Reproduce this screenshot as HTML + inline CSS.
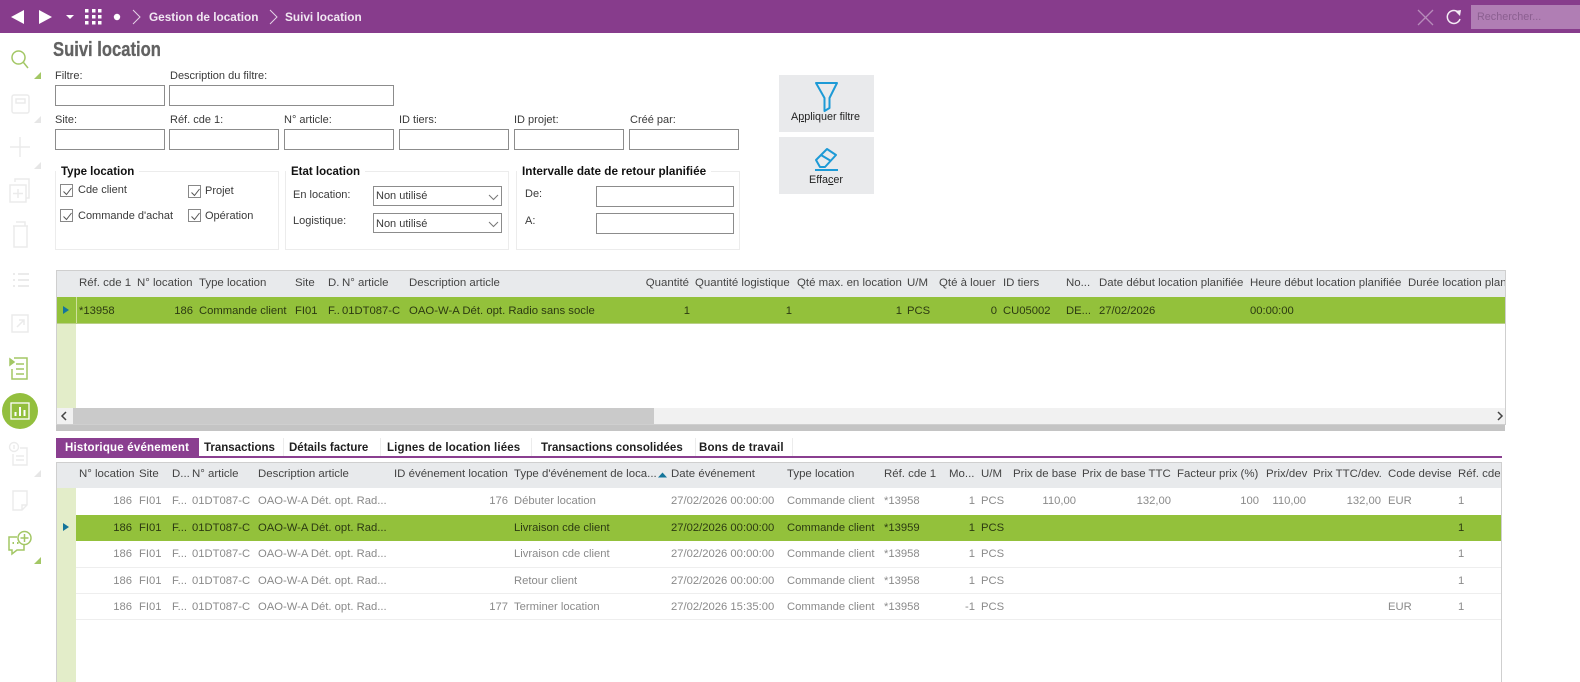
<!DOCTYPE html>
<html lang="fr"><head><meta charset="utf-8"><title>Suivi location</title>
<style>
html,body{margin:0;padding:0;background:#fff}
body{width:1580px;height:682px;overflow:hidden;position:relative;font-family:"Liberation Sans",Arial,sans-serif;color:#333}
div,span,svg{position:absolute}
#root{left:0;top:0;width:1580px;height:682px;overflow:hidden;filter:blur(.35px)}
.t{white-space:nowrap;line-height:14px;font-size:11px;color:#3a3a3a}
.in{background:#fff;border:1px solid #8c8c8c;box-sizing:border-box}
.gb{border:1px solid #ececec;box-sizing:border-box}
.gt{white-space:nowrap;font-weight:bold;font-size:11.5px;line-height:14px;color:#111;background:#fff;padding:0 5px;top:165px}
.cb{width:13px;height:13px;border:1px solid #888;box-sizing:border-box;background:#fff}
.cb svg{left:1px;top:1px}
.h{white-space:nowrap;font-size:11.45px;line-height:14px;color:#444}
.c{white-space:nowrap;font-size:11.25px;line-height:14px;color:#8a8a8a}
.s{color:#2c3a12}
.r{transform:translateX(-100%)}
.tab{white-space:nowrap;font-weight:bold;font-size:11.5px;line-height:14px;color:#1f1f1f;top:441px}
.tsep{width:1px;top:438px;height:18px;background:#ececec}
.tri{width:0;height:0;border-style:solid;border-width:0 0 7px 7px;border-color:transparent transparent #e6e6e6 transparent}
</style></head><body><div id="root">

<!-- top bar -->
<div style="left:0;top:0;width:1580px;height:33px;background:#873c8c"></div>
<svg style="left:0;top:0" width="300" height="33">
<path d="M11 17 24 10V24Z" fill="#fff"/><path d="M52 17 39 10V24Z" fill="#fff"/><path d="M66 15H74L70 19Z" fill="#fff"/>
<g fill="#fff"><rect x="85" y="9" width="3.5" height="3.5"/><rect x="92" y="9" width="3.5" height="3.5"/><rect x="98" y="9" width="3.5" height="3.5"/><rect x="85" y="15" width="3.5" height="3.5"/><rect x="92" y="15" width="3.5" height="3.5"/><rect x="98" y="15" width="3.5" height="3.5"/><rect x="85" y="21" width="3.5" height="3.5"/><rect x="92" y="21" width="3.5" height="3.5"/><rect x="98" y="21" width="3.5" height="3.5"/></g>
<circle cx="117" cy="17" r="3.2" fill="#fff"/>
<path d="M133 10 140 17 133 24M270 10 277 17 270 24" fill="none" stroke="#e5d3e6" stroke-width="1"/>
</svg>
<div class="t" style="left:149px;top:10px;font-weight:bold;font-size:11.8px;color:#f1e7f2">Gestion de location</div>
<div class="t" style="left:285px;top:10px;font-weight:bold;font-size:11.8px;color:#f1e7f2">Suivi location</div>
<svg style="left:1410px;top:5px" width="60" height="25">
<path d="M8 5 23 20M23 5 8 20" stroke="#b78bba" stroke-width="1.3" fill="none"/>
<path d="M49 8A6.5 6.5 0 1 0 50 14" stroke="#f4ecf5" stroke-width="1.5" fill="none"/><path d="M45 6 51 5 50 11Z" fill="#f4ecf5"/>
</svg>
<div style="left:1471px;top:5px;width:109px;height:24px;background:#b07eb4"></div>
<div class="t" style="left:1477px;top:10px;color:#8b5f90;font-size:10.8px">Rechercher...</div>

<!-- sidebar icons -->
<svg style="left:0;top:33px" width="50" height="649" fill="none">
<g stroke="#a3c765" stroke-width="1.5"><circle cx="18.500" cy="24.500" r="6.500"/><path d="M23.500 29.500 28 35"/></g>
<g stroke="#ebebeb" stroke-width="1.5">
<rect x="12" y="62" width="17" height="18" rx="2"/><rect x="16" y="66" width="9" height="4"/>
<path d="M20 104V124M10 114H30"/>
<path d="M15 149V146H29V165H26M10 152H26V169H10ZM18 156V165M13 160.500H23"/>
<path d="M14 193H27V214H14ZM13 193H28M16 189H25V193"/>
<path d="M18 241H29M18 247H29M18 253H29M13 241H15M13 247H15M13 253H15" stroke-width="2"/>
<path d="M12 282H28V299H12ZM17 294 24 287M19 287H24V292"/>
</g>
<g stroke="#a3c765" stroke-width="1.5"><path d="M14 325H27V346H12V336M16 331H24M16 336H24M16 341H24"/><path d="M10 326 14 329 10 332Z" fill="#a3c765"/></g>
<circle cx="20" cy="378" r="18" fill="#93bf3e"/>
<rect x="11" y="370" width="18" height="16" stroke="#fff" stroke-width="1.3"/>
<path d="M15.500 383V379M20 383V374M24.500 383V377" stroke="#fff" stroke-width="2"/>
<g stroke="#ebebeb" stroke-width="1.400"><circle cx="14" cy="414" r="4.500"/><path d="M14 412V416"/><path d="M20 415H27V432H13V421M16 423H24M16 427H24"/>
<path d="M13 458H27V472L22 477H13ZM27 472H22V477"/></g>
<g stroke="#a3c765" stroke-width="1.500"><circle cx="24.500" cy="505" r="6.500"/><path d="M24.500 501V509M20.500 505H28.500"/><path d="M17 504H9V517H12V521L17 517H24V512"/><path d="M12.500 510H14M17 510H18.500" stroke-width="2"/></g>
</svg>
<div class="tri" style="left:34px;top:72px;border-bottom-color:#a3c765"></div>
<div class="tri" style="left:34px;top:116px"></div>
<div class="tri" style="left:34px;top:162px"></div>
<div class="tri" style="left:34px;top:470px"></div>
<div class="tri" style="left:34px;top:557px;border-bottom-color:#a3c765"></div>

<!-- title -->
<div class="t" style="left:53px;top:39px;font-size:20px;line-height:22px;font-weight:bold;color:#626262;-webkit-text-stroke:.3px #626262;transform:scaleX(.83);transform-origin:left top">Suivi location</div>

<!-- filters -->
<div class="t" style="left:55px;top:69px">Filtre:</div>
<div class="t" style="left:170px;top:69px">Description du filtre:</div>
<div class="in" style="left:55px;top:85px;width:110px;height:21px"></div>
<div class="in" style="left:169px;top:85px;width:225px;height:21px"></div>
<div class="t" style="left:55px;top:113px">Site:</div>
<div class="t" style="left:170px;top:113px">Réf. cde 1:</div>
<div class="t" style="left:284px;top:113px">N° article:</div>
<div class="t" style="left:399px;top:113px">ID tiers:</div>
<div class="t" style="left:514px;top:113px">ID projet:</div>
<div class="t" style="left:630px;top:113px">Créé par:</div>
<div class="in" style="left:55px;top:129px;width:110px;height:21px"></div>
<div class="in" style="left:169px;top:129px;width:110px;height:21px"></div>
<div class="in" style="left:284px;top:129px;width:110px;height:21px"></div>
<div class="in" style="left:399px;top:129px;width:110px;height:21px"></div>
<div class="in" style="left:514px;top:129px;width:110px;height:21px"></div>
<div class="in" style="left:629px;top:129px;width:110px;height:21px"></div>

<!-- group boxes -->
<div class="gb" style="left:55px;top:171px;width:224px;height:79px"></div>
<div class="gt" style="left:56px">Type location</div>
<div class="gb" style="left:285px;top:171px;width:224px;height:79px"></div>
<div class="gt" style="left:286px">Etat location</div>
<div class="gb" style="left:516px;top:171px;width:224px;height:79px"></div>
<div class="gt" style="left:517px;font-size:11.75px">Intervalle date de retour planifiée</div>

<div class="cb" style="left:60px;top:184px"><svg width="11" height="11" fill="none"><path d="M1.500 5.500 4.500 8.500 9.500 2" stroke="#555"/></svg></div>
<div class="t" style="left:78px;top:183px">Cde client</div>
<div class="cb" style="left:188px;top:185px"><svg width="11" height="11" fill="none"><path d="M1.500 5.500 4.500 8.500 9.500 2" stroke="#555"/></svg></div>
<div class="t" style="left:205px;top:184px">Projet</div>
<div class="cb" style="left:60px;top:209px"><svg width="11" height="11" fill="none"><path d="M1.500 5.500 4.500 8.500 9.500 2" stroke="#555"/></svg></div>
<div class="t" style="left:78px;top:209px">Commande d'achat</div>
<div class="cb" style="left:188px;top:209px"><svg width="11" height="11" fill="none"><path d="M1.500 5.500 4.500 8.500 9.500 2" stroke="#555"/></svg></div>
<div class="t" style="left:205px;top:209px">Opération</div>

<div class="t" style="left:293px;top:188px">En location:</div>
<div class="t" style="left:293px;top:214px">Logistique:</div>
<div class="in" style="left:373px;top:186px;width:129px;height:20px"></div>
<div class="t" style="left:376px;top:189px">Non utilisé</div>
<div class="in" style="left:373px;top:213px;width:129px;height:20px"></div>
<div class="t" style="left:376px;top:217px">Non utilisé</div>
<svg style="left:488px;top:190px" width="12" height="40" fill="none"><path d="M1 5 5.500 9.500 10 5M1 32 5.500 36.500 10 32" stroke="#777"/></svg>
<div class="t" style="left:525px;top:187px">De:</div>
<div class="t" style="left:525px;top:214px">A:</div>
<div class="in" style="left:596px;top:186px;width:138px;height:21px"></div>
<div class="in" style="left:596px;top:213px;width:138px;height:21px"></div>

<!-- buttons -->
<div style="left:779px;top:75px;width:95px;height:57px;background:#e9eaec"></div>
<div style="left:779px;top:137px;width:95px;height:57px;background:#e9eaec"></div>
<svg style="left:779px;top:75px" width="95" height="120" fill="none">
<path d="M37 8H58L50.500 23V33L45.500 36V23Z" stroke="#1d9ad6" stroke-width="2" stroke-linejoin="round"/>
<path d="M37 85 48 74 57 80 46 92H41ZM42 80 52 86" stroke="#1d9ad6" stroke-width="2" stroke-linejoin="round"/>
<path d="M36 95H59" stroke="#1d9ad6" stroke-width="2"/>
</svg>
<div class="t" style="left:791px;top:110px;color:#222;font-size:10.8px">A<span style="position:static;text-decoration:underline">p</span>pliquer filtre</div>
<div class="t" style="left:809px;top:173px;color:#222;font-size:10.8px">Effa<span style="position:static;text-decoration:underline">c</span>er</div>

<!-- grid 1 -->
<div style="left:56px;top:270px;width:1450px;height:155px;border:1px solid #cfcfcf;box-sizing:border-box;background:#fff"></div>
<div style="left:57px;top:271px;width:1448px;height:26px;background:#e8eaec"></div>
<div style="left:57px;top:324px;width:19px;height:84px;background:#e3edc9"></div>
<div style="left:57px;top:297px;width:1448px;height:27px;background:#93c13b;border-bottom:1px solid #b9cf86;box-sizing:border-box"></div>
<div style="left:76px;top:297px;width:1px;height:26px;background:#cfe09d"></div>
<svg style="left:62px;top:305px" width="8" height="10"><path d="M1 1 7 5 1 9Z" fill="#14759a"/></svg>

<div class="h" style="left:79px;top:276px">Réf. cde 1</div>
<div class="h" style="left:137px;top:276px">N° location</div>
<div class="h" style="left:199px;top:276px">Type location</div>
<div class="h" style="left:295px;top:276px">Site</div>
<div class="h" style="left:328px;top:276px">D.</div>
<div class="h" style="left:342px;top:276px">N° article</div>
<div class="h" style="left:409px;top:276px">Description article</div>
<div class="h r" style="left:689px;top:276px">Quantité</div>
<div class="h" style="left:695px;top:276px">Quantité logistique</div>
<div class="h" style="left:797px;top:276px">Qté max. en location</div>
<div class="h" style="left:907px;top:276px">U/M</div>
<div class="h" style="left:939px;top:276px">Qté à louer</div>
<div class="h" style="left:1003px;top:276px">ID tiers</div>
<div class="h" style="left:1066px;top:276px">No...</div>
<div class="h" style="left:1099px;top:276px">Date début location planifiée</div>
<div class="h" style="left:1250px;top:276px">Heure début location planifiée</div>
<div style="left:1408px;top:276px;width:97px;height:14px;overflow:hidden"><div class="h" style="left:0;top:0">Durée location planifiée</div></div>

<div class="c s" style="left:79px;top:304px">*13958</div>
<div class="c s r" style="left:193px;top:304px">186</div>
<div class="c s" style="left:199px;top:304px">Commande client</div>
<div class="c s" style="left:295px;top:304px">FI01</div>
<div class="c s" style="left:328px;top:304px">F..</div>
<div class="c s" style="left:342px;top:304px">01DT087-C</div>
<div class="c s" style="left:409px;top:304px;font-size:11.35px">OAO-W-A Dét. opt. Radio sans socle</div>
<div class="c s r" style="left:690px;top:304px">1</div>
<div class="c s r" style="left:792px;top:304px">1</div>
<div class="c s r" style="left:902px;top:304px">1</div>
<div class="c s" style="left:907px;top:304px">PCS</div>
<div class="c s r" style="left:997px;top:304px">0</div>
<div class="c s" style="left:1003px;top:304px">CU05002</div>
<div class="c s" style="left:1066px;top:304px">DE...</div>
<div class="c s" style="left:1099px;top:304px">27/02/2026</div>
<div class="c s" style="left:1250px;top:304px">00:00:00</div>

<!-- scrollbar + splitter -->
<div style="left:57px;top:408px;width:1448px;height:16px;background:#f1f1f1"></div>
<div style="left:73px;top:408px;width:581px;height:16px;background:#cacaca"></div>
<svg style="left:57px;top:408px" width="1448" height="16" fill="none"><path d="M9 4 5 8 9 12M1441 4 1445 8 1441 12" stroke="#444" stroke-width="1.5"/></svg>
<div style="left:56px;top:425px;width:1449px;height:6px;background:#c4c4c4"></div>

<!-- tabs -->
<div style="left:56px;top:456px;width:1446px;height:2px;background:#8a3f90"></div>
<div style="left:56px;top:438px;width:143px;height:19px;background:#8a3f90"></div>
<div class="tab" style="left:65px;color:#fff;letter-spacing:.2px">Historique événement</div>
<div class="tab" style="left:204px">Transactions</div>
<div class="tsep" style="left:283px"></div>
<div class="tab" style="left:289px">Détails facture</div>
<div class="tsep" style="left:380px"></div>
<div class="tab" style="left:387px;letter-spacing:.15px">Lignes de location liées</div>
<div class="tsep" style="left:531px"></div>
<div class="tab" style="left:541px;letter-spacing:.05px">Transactions consolidées</div>
<div class="tsep" style="left:695px"></div>
<div class="tab" style="left:699px;letter-spacing:.15px">Bons de travail</div>
<div class="tsep" style="left:792px"></div>

<!-- grid 2 -->
<div style="left:56px;top:462px;width:1446px;height:230px;border:1px solid #cfcfcf;box-sizing:border-box;background:#fff"></div>
<div style="left:57px;top:463px;width:1444px;height:25px;background:#e8eaec"></div>
<div style="left:57px;top:488px;width:19px;height:194px;background:#e3edc9"></div>
<div style="left:76px;top:515px;width:1425px;height:26px;background:#93c13b"></div>
<div style="left:76px;top:567px;width:1425px;height:1px;background:#eee"></div>
<div style="left:76px;top:593px;width:1425px;height:1px;background:#eee"></div>
<div style="left:76px;top:619px;width:1425px;height:1px;background:#eee"></div>
<svg style="left:62px;top:522px" width="8" height="10"><path d="M1 1 7 5 1 9Z" fill="#14759a"/></svg>

<div class="h" style="left:79px;top:467px">N° location</div>
<div class="h" style="left:139px;top:467px">Site</div>
<div class="h" style="left:172px;top:467px">D...</div>
<div class="h" style="left:192px;top:467px">N° article</div>
<div class="h" style="left:258px;top:467px">Description article</div>
<div class="h" style="left:394px;top:467px">ID événement location</div>
<div class="h" style="left:514px;top:467px">Type d'événement de loca...</div>
<svg style="left:658px;top:472px" width="9" height="6"><path d="M0 5.500 4.500 .5 9 5.500Z" fill="#14759a"/></svg>
<div class="h" style="left:671px;top:467px">Date événement</div>
<div class="h" style="left:787px;top:467px">Type location</div>
<div class="h" style="left:884px;top:467px">Réf. cde 1</div>
<div class="h" style="left:949px;top:467px">Mo...</div>
<div class="h" style="left:981px;top:467px">U/M</div>
<div class="h" style="left:1013px;top:467px">Prix de base</div>
<div class="h" style="left:1082px;top:467px">Prix de base TTC</div>
<div class="h" style="left:1177px;top:467px">Facteur prix (%)</div>
<div class="h" style="left:1266px;top:467px">Prix/dev</div>
<div class="h" style="left:1313px;top:467px">Prix TTC/dev.</div>
<div class="h" style="left:1388px;top:467px">Code devise</div>
<div style="left:1458px;top:467px;width:43px;height:14px;overflow:hidden"><div class="h" style="left:0;top:0">Réf. cde</div></div>

<!-- row 1 -->
<div class="c r" style="left:132px;top:494px">186</div><div class="c" style="left:139px;top:494px">FI01</div><div class="c" style="left:172px;top:494px">F...</div><div class="c" style="left:192px;top:494px">01DT087-C</div><div class="c" style="left:258px;top:494px">OAO-W-A Dét. opt. Rad...</div>
<div class="c r" style="left:508px;top:494px">176</div><div class="c" style="left:514px;top:494px">Débuter location</div><div class="c" style="left:671px;top:494px">27/02/2026 00:00:00</div><div class="c" style="left:787px;top:494px">Commande client</div><div class="c" style="left:884px;top:494px">*13958</div><div class="c r" style="left:975px;top:494px">1</div><div class="c" style="left:981px;top:494px">PCS</div>
<div class="c r" style="left:1076px;top:494px">110,00</div><div class="c r" style="left:1171px;top:494px">132,00</div><div class="c r" style="left:1259px;top:494px">100</div><div class="c r" style="left:1306px;top:494px">110,00</div><div class="c r" style="left:1381px;top:494px">132,00</div><div class="c" style="left:1388px;top:494px">EUR</div><div class="c" style="left:1458px;top:494px">1</div>
<!-- row 2 -->
<div class="c s r" style="left:132px;top:521px">186</div><div class="c s" style="left:139px;top:521px">FI01</div><div class="c s" style="left:172px;top:521px">F...</div><div class="c s" style="left:192px;top:521px">01DT087-C</div><div class="c s" style="left:258px;top:521px">OAO-W-A Dét. opt. Rad...</div>
<div class="c s" style="left:514px;top:521px">Livraison cde client</div><div class="c s" style="left:671px;top:521px">27/02/2026 00:00:00</div><div class="c s" style="left:787px;top:521px">Commande client</div><div class="c s" style="left:884px;top:521px">*13959</div><div class="c s r" style="left:975px;top:521px">1</div><div class="c s" style="left:981px;top:521px">PCS</div><div class="c s" style="left:1458px;top:521px">1</div>
<!-- row 3 -->
<div class="c r" style="left:132px;top:547px">186</div><div class="c" style="left:139px;top:547px">FI01</div><div class="c" style="left:172px;top:547px">F...</div><div class="c" style="left:192px;top:547px">01DT087-C</div><div class="c" style="left:258px;top:547px">OAO-W-A Dét. opt. Rad...</div>
<div class="c" style="left:514px;top:547px">Livraison cde client</div><div class="c" style="left:671px;top:547px">27/02/2026 00:00:00</div><div class="c" style="left:787px;top:547px">Commande client</div><div class="c" style="left:884px;top:547px">*13958</div><div class="c r" style="left:975px;top:547px">1</div><div class="c" style="left:981px;top:547px">PCS</div><div class="c" style="left:1458px;top:547px">1</div>
<!-- row 4 -->
<div class="c r" style="left:132px;top:574px">186</div><div class="c" style="left:139px;top:574px">FI01</div><div class="c" style="left:172px;top:574px">F...</div><div class="c" style="left:192px;top:574px">01DT087-C</div><div class="c" style="left:258px;top:574px">OAO-W-A Dét. opt. Rad...</div>
<div class="c" style="left:514px;top:574px">Retour client</div><div class="c" style="left:671px;top:574px">27/02/2026 00:00:00</div><div class="c" style="left:787px;top:574px">Commande client</div><div class="c" style="left:884px;top:574px">*13958</div><div class="c r" style="left:975px;top:574px">1</div><div class="c" style="left:981px;top:574px">PCS</div><div class="c" style="left:1458px;top:574px">1</div>
<!-- row 5 -->
<div class="c r" style="left:132px;top:600px">186</div><div class="c" style="left:139px;top:600px">FI01</div><div class="c" style="left:172px;top:600px">F...</div><div class="c" style="left:192px;top:600px">01DT087-C</div><div class="c" style="left:258px;top:600px">OAO-W-A Dét. opt. Rad...</div>
<div class="c r" style="left:508px;top:600px">177</div><div class="c" style="left:514px;top:600px">Terminer location</div><div class="c" style="left:671px;top:600px">27/02/2026 15:35:00</div><div class="c" style="left:787px;top:600px">Commande client</div><div class="c" style="left:884px;top:600px">*13958</div><div class="c r" style="left:975px;top:600px">-1</div><div class="c" style="left:981px;top:600px">PCS</div><div class="c" style="left:1388px;top:600px">EUR</div><div class="c" style="left:1458px;top:600px">1</div>

</div></body></html>
